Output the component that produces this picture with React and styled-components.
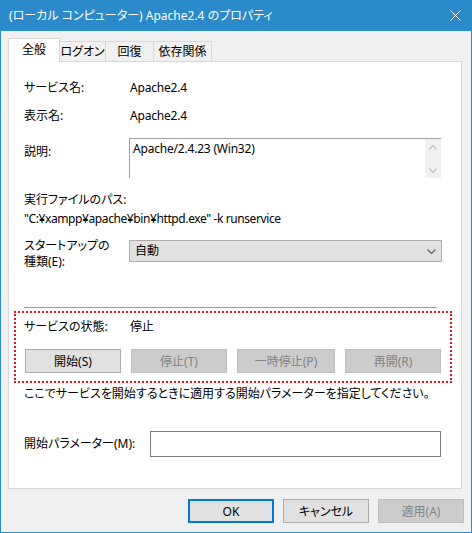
import React from 'react';
import styled, { createGlobalStyle } from 'styled-components';

const blue = '#2b8ac9';

const GlobalStyle = createGlobalStyle`
    html, body {
        margin: 0;
        padding: 0;
        background: #ffffff;
    }
    body {
        font-family: "Noto Sans", "Noto Sans CJK JP", sans-serif;
        font-size: 12px;
        color: #000000;
        font-feature-settings: "palt";
    }
    * {
        box-sizing: border-box;
    }
`;

const Window = styled.div`
    width: 472px;
    height: 533px;
    display: flex;
    flex-direction: column;
    background: #f0f0f0;
    border: 1px solid ${blue};
    border-top: none;
`;

const TitleBar = styled.div`
    height: 31px;
    flex-shrink: 0;
    display: flex;
    align-items: center;
    justify-content: space-between;
    padding: 0 10px 0 8px;
    background: ${blue};
    color: #ffffff;
    line-height: 16px;
`;

const Body = styled.div`
    padding: 7px 9px 0 7px;
`;

const TabStrip = styled.div`
    height: 23px;
    display: flex;
    align-items: flex-end;
`;

const Tab = styled.div`
    position: relative;
    width: ${(p) => p.$w}px;
    height: ${(p) => (p.$active ? 24 : 20)}px;
    margin-left: ${(p) => (p.$first ? 0 : -1)}px;
    margin-bottom: ${(p) => (p.$active ? -1 : 0)}px;
    padding-top: ${(p) => (p.$active ? 3 : 2)}px;
    z-index: ${(p) => (p.$active ? 2 : 1)};
    background: ${(p) => (p.$active ? '#ffffff' : '#f0f0f0')};
    border: 1px solid #d9d9d9;
    border-bottom: none;
    text-align: center;
    line-height: 16px;
`;

const Panel = styled.div`
    height: 428px;
    display: flex;
    flex-direction: column;
    padding-left: 15px;
    background: #ffffff;
    border: 1px solid #d9d9d9;
`;

const Field = styled.div`
    display: grid;
    grid-template-columns: ${(p) => p.$label || 105}px auto;
    align-items: ${(p) => p.$align || 'start'};
    margin-top: ${(p) => p.$mt || 0}px;
    line-height: 16px;
`;

const Label = styled.div`
    padding-top: ${(p) => p.$pt || 0}px;
    line-height: ${(p) => p.$lh || 16}px;
`;

const Value = styled.div`
    padding-left: 1px;
    letter-spacing: -0.2px;
`;

const Line = styled.div`
    margin-top: ${(p) => p.$mt || 0}px;
    line-height: 16px;
    white-space: nowrap;
    letter-spacing: ${(p) => p.$ls || 0}px;
`;

const DescBox = styled.div`
    width: 312px;
    height: 40px;
    display: flex;
    justify-content: space-between;
    border-top: 1px solid #a0a0a0;
    border-left: 1px solid #a0a0a0;
`;

const DescText = styled.div`
    padding: 2px 0 0 3px;
    line-height: 16px;
    letter-spacing: -0.2px;
`;

const ScrollBar = styled.div`
    width: 16px;
    display: flex;
    flex-direction: column;
    align-items: center;
    justify-content: space-between;
    padding: 6px 0 5px;
    background: #f0f0f0;
`;

const Select = styled.div`
    width: 313px;
    height: 22px;
    margin-top: 2px;
    display: flex;
    align-items: center;
    justify-content: space-between;
    padding: 0 5px 0 5px;
    background: #e1e1e1;
    border: 1px solid #adadad;
`;

const Separator = styled.div`
    width: 413px;
    height: 1px;
    margin-top: 37px;
    background: #a0a0a0;
`;

const StatusGroup = styled.div`
    width: 438px;
    margin: 3px 0 0 -10px;
    padding: 6px 0 8px 8px;
    border: 2px dotted #e81123;
`;

const ButtonRow = styled.div`
    display: flex;
    gap: 10px;
    margin: 14px 0 0 1px;
`;

const Button = styled.div`
    width: ${(p) => p.$w || 96}px;
    height: 24px;
    display: flex;
    align-items: center;
    justify-content: center;
    background: ${(p) => (p.$disabled ? '#cccccc' : '#e1e1e1')};
    border: 1px solid ${(p) => (p.$disabled ? '#bfbfbf' : '#adadad')};
    color: ${(p) => (p.$disabled ? '#838383' : '#000000')};
`;

const ParamInput = styled.div`
    width: 291px;
    height: 26px;
    border: 1px solid #7a7a7a;
    background: #ffffff;
`;

const Footer = styled.div`
    display: flex;
    justify-content: flex-end;
    gap: 9px;
    margin-top: 10px;
    margin-right: -2px;
`;

const DialogButton = styled.div`
    width: 86px;
    height: 24px;
    display: flex;
    align-items: center;
    justify-content: center;
    background: ${(p) => (p.$disabled ? '#cccccc' : '#e1e1e1')};
    border: ${(p) =>
        p.$default ? '2px solid #0078d7' : `1px solid ${p.$disabled ? '#bfbfbf' : '#adadad'}`};
    color: ${(p) => (p.$disabled ? '#838383' : '#000000')};
`;

const CloseIcon = () => (
    <svg width="11" height="11" viewBox="0 0 11 11">
        <path d="M0.5 0.5 L10.5 10.5 M10.5 0.5 L0.5 10.5" stroke="#ffffff" strokeWidth="1" />
    </svg>
);

const Chevron = ({ up, color = '#606060', w = 9, h = 5 }) => (
    <svg width={w} height={h} viewBox={`0 0 ${w} ${h}`}>
        <path
            d={up ? `M0.5 ${h - 0.5} L${w / 2} 0.5 L${w - 0.5} ${h - 0.5}` : `M0.5 0.5 L${w / 2} ${h - 0.5} L${w - 0.5} 0.5`}
            stroke={color}
            strokeWidth="1.2"
            fill="none"
        />
    </svg>
);

const tabs = [
    { label: '全般', w: 52, active: true },
    { label: 'ログオン', w: 47 },
    { label: '回復', w: 49 },
    { label: '依存関係', w: 59 },
];

const App = () => {
    return (
        <Window>
            <GlobalStyle />
            <TitleBar>
                <span>(ローカル コンピューター) Apache2.4 のプロパティ</span>
                <CloseIcon />
            </TitleBar>
            <Body>
                <TabStrip>
                    {tabs.map((t, i) => (
                        <Tab key={t.label} $w={t.w} $active={t.active} $first={i === 0}>
                            {t.label}
                        </Tab>
                    ))}
                </TabStrip>
                <Panel>
                    <Field $mt={18}>
                        <Label>サービス名:</Label>
                        <Value>Apache2.4</Value>
                    </Field>
                    <Field $mt={12}>
                        <Label>表示名:</Label>
                        <Value>Apache2.4</Value>
                    </Field>
                    <Field $mt={14}>
                        <Label $pt={6}>説明:</Label>
                        <DescBox>
                            <DescText>Apache/2.4.23 (Win32)</DescText>
                            <ScrollBar>
                                <Chevron up color="#c0c0c0" w={8} h={5} />
                                <Chevron color="#c0c0c0" w={8} h={5} />
                            </ScrollBar>
                        </DescBox>
                    </Field>
                    <Line $mt={14}>実行ファイルのパス:</Line>
                    <Line $mt={3} $ls={-0.4}>"C:¥xampp¥apache¥bin¥httpd.exe" -k runservice</Line>
                    <Field $mt={11}>
                        <Label $lh={16}>
                            スタートアップの
                            <br />
                            種類(E):
                        </Label>
                        <Select>
                            <span>自動</span>
                            <Chevron />
                        </Select>
                    </Field>
                    <Separator />
                    <StatusGroup>
                        <Field>
                            <Label>サービスの状態:</Label>
                            <Value>停止</Value>
                        </Field>
                        <ButtonRow>
                            <Button>開始(S)</Button>
                            <Button $disabled>停止(T)</Button>
                            <Button $disabled $w={98}>一時停止(P)</Button>
                            <Button $disabled>再開(R)</Button>
                        </ButtonRow>
                    </StatusGroup>
                    <Line $mt={3}>ここでサービスを開始するときに適用する開始パラメーターを指定してください。</Line>
                    <Field $mt={29} $label={126} $align="center">
                        <Label>開始パラメーター(M):</Label>
                        <ParamInput />
                    </Field>
                </Panel>
                <Footer>
                    <DialogButton $default>OK</DialogButton>
                    <DialogButton>キャンセル</DialogButton>
                    <DialogButton $disabled>適用(A)</DialogButton>
                </Footer>
            </Body>
        </Window>
    );
};

export default App;
